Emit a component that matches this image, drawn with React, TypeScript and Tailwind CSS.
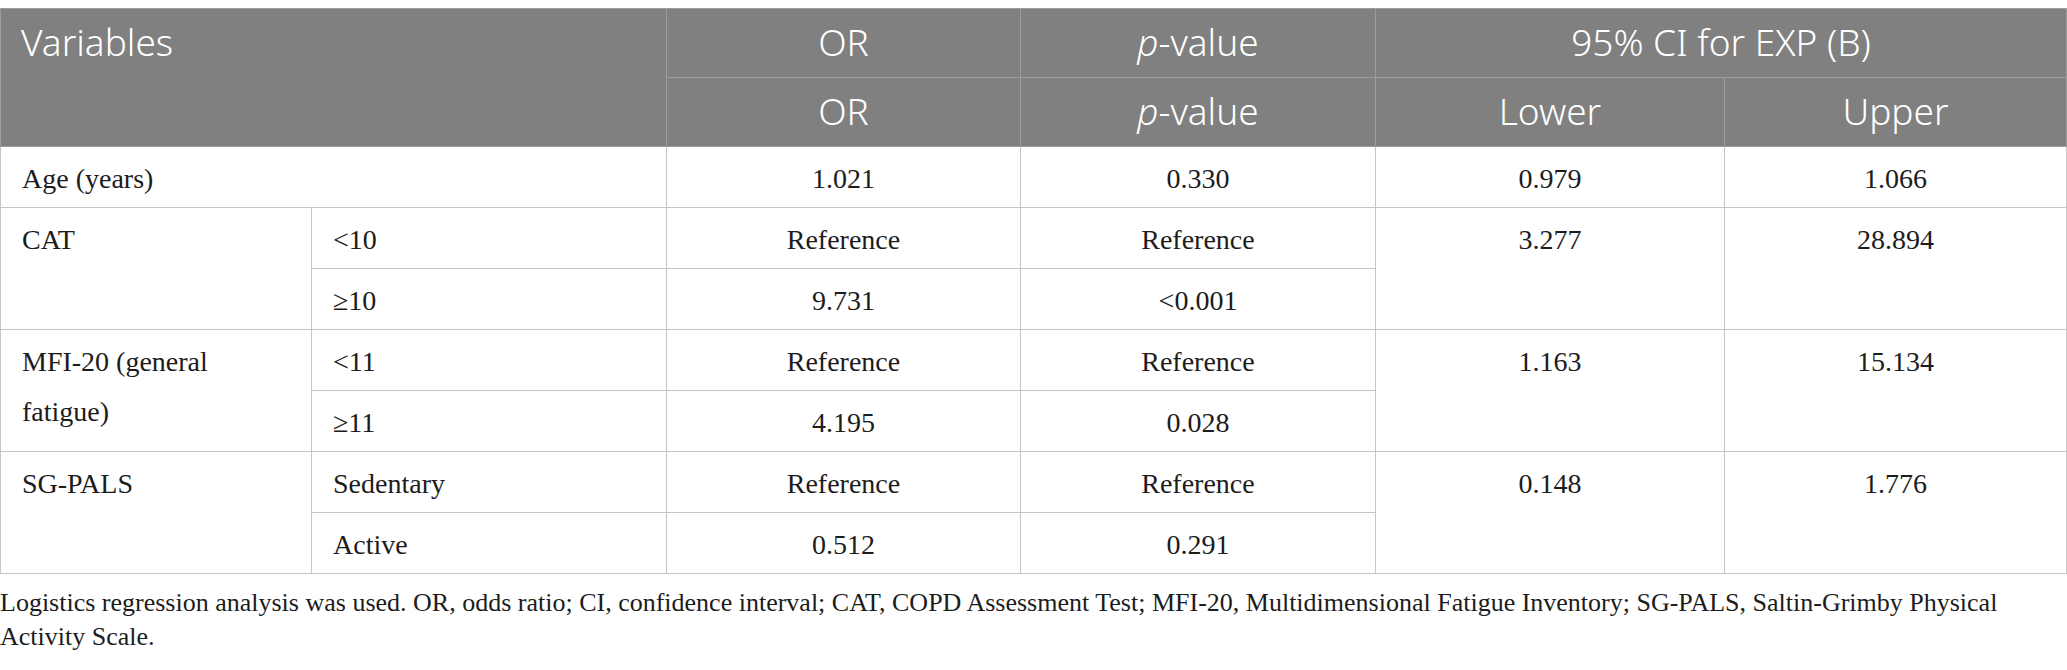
type Row = {
  group?: { label: string; span: number };
  sub?: string;
  or: string;
  p: string;
  ci?: { lower: string; upper: string; span: number };
};

const rows: Row[] = [
  { group: { label: 'Age (years)', span: 1 }, or: '1.021', p: '0.330', ci: { lower: '0.979', upper: '1.066', span: 1 } },
  { group: { label: 'CAT', span: 2 }, sub: '<10', or: 'Reference', p: 'Reference', ci: { lower: '3.277', upper: '28.894', span: 2 } },
  { sub: '≥10', or: '9.731', p: '<0.001' },
  { group: { label: 'MFI-20 (general fatigue)', span: 2 }, sub: '<11', or: 'Reference', p: 'Reference', ci: { lower: '1.163', upper: '15.134', span: 2 } },
  { sub: '≥11', or: '4.195', p: '0.028' },
  { group: { label: 'SG-PALS', span: 2 }, sub: 'Sedentary', or: 'Reference', p: 'Reference', ci: { lower: '0.148', upper: '1.776', span: 2 } },
  { sub: 'Active', or: '0.512', p: '0.291' },
];

const head = 'bg-[#7f807f] text-white font-light text-[37px] leading-[50px] pt-[8px] pb-[10px] border border-[#9c9d9c] align-top';
const cell = 'border border-[#c6c6c6] text-[28px] leading-[50px] pt-[7px] pb-[3px] px-[21px] align-top';

function PValue() {
  return (
    <>
      <span className="italic">p</span>-value
    </>
  );
}

export default function App() {
  return (
    <div className="bg-white w-[2067px] h-[670px] pt-[8px] text-[#1c1c1c]">
      <table
        className="table-fixed border-collapse w-[2066px]"
        style={{ fontFamily: '"Liberation Serif", "Times New Roman", serif' }}
      >
        <colgroup>
          <col className="w-[311px]" />
          <col className="w-[355px]" />
          <col className="w-[354px]" />
          <col className="w-[355px]" />
          <col className="w-[349px]" />
          <col className="w-[342px]" />
        </colgroup>
        <thead style={{ fontFamily: '"Noto Sans", "Open Sans", sans-serif' }}>
          <tr>
            <th colSpan={2} rowSpan={2} className={`${head} text-left px-[20px]`}>
              Variables
            </th>
            <th className={`${head} text-center`}>OR</th>
            <th className={`${head} text-center`}>
              <PValue />
            </th>
            <th colSpan={2} className={`${head} text-center`}>
              95% CI for EXP (B)
            </th>
          </tr>
          <tr>
            <th className={`${head} text-center`}>OR</th>
            <th className={`${head} text-center`}>
              <PValue />
            </th>
            <th className={`${head} text-center`}>Lower</th>
            <th className={`${head} text-center`}>Upper</th>
          </tr>
        </thead>
        <tbody>
          {rows.map((r, i) => (
            <tr key={i}>
              {r.group && (
                <td
                  rowSpan={r.group.span}
                  colSpan={r.sub ? 1 : 2}
                  className={`${cell} text-left`}
                >
                  {r.group.label}
                </td>
              )}
              {r.sub && <td className={`${cell} text-left`}>{r.sub}</td>}
              <td className={`${cell} text-center`}>{r.or}</td>
              <td className={`${cell} text-center`}>{r.p}</td>
              {r.ci && (
                <>
                  <td rowSpan={r.ci.span} className={`${cell} text-center`}>
                    {r.ci.lower}
                  </td>
                  <td rowSpan={r.ci.span} className={`${cell} text-center`}>
                    {r.ci.upper}
                  </td>
                </>
              )}
            </tr>
          ))}
        </tbody>
      </table>
      <p
        className="mt-[12px] text-[26px] leading-[34px] text-[#1c1c1c] w-[2060px]"
        style={{ fontFamily: '"Liberation Serif", "Times New Roman", serif' }}
      >
        Logistics regression analysis was used. OR, odds ratio; CI, confidence interval; CAT, COPD Assessment
        Test; MFI-20, Multidimensional Fatigue Inventory; SG-PALS, Saltin-Grimby Physical Activity Scale.
      </p>
    </div>
  );
}
